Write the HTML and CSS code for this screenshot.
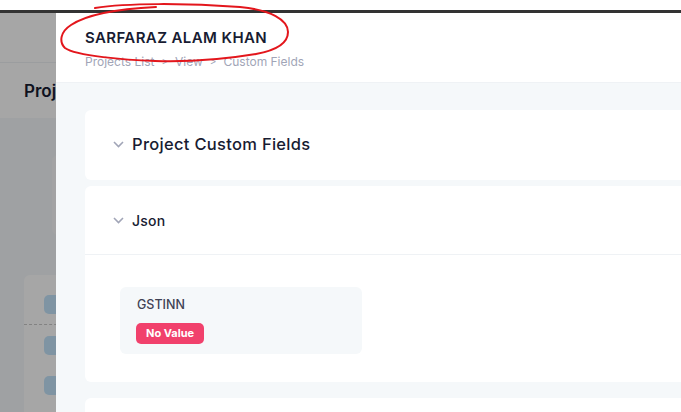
FILE: index.html
```html
<!DOCTYPE html>
<html>
<head>
<meta charset="utf-8">
<link rel="stylesheet" href="styles.css">
</head>
<body>
<div class="topgap"></div>
<div class="topbar"></div>
<div class="stage">
  <div class="page">
    <div class="page-header"></div>
    <div class="page-toolbar"><span class="page-title">Projects</span></div>
    <div class="page-content">
      <div class="page-card-a"></div>
      <div class="page-card-b">
        <div class="row first"><span class="pill"></span></div>
        <div class="row dashed"><span class="pill"></span></div>
        <div class="row"><span class="pill"></span></div>
      </div>
    </div>
  </div>
  <div class="backdrop"></div>
  <div class="drawer">
    <div class="drawer-header">
      <div class="drawer-title">SARFARAZ ALAM KHAN</div>
      <div class="crumbs"><span>Projects List</span><span class="sep">&gt;</span><span>View</span><span class="sep">&gt;</span><span>Custom Fields</span></div>
    </div>
    <div class="drawer-body">
      <div class="card card-first">
        <div class="card-head big">
          <svg class="chev" width="11" height="7" viewBox="0 0 11 7"><path d="M1 1 L5.5 5.5 L10 1" fill="none" stroke="#a1a5b7" stroke-width="1.6"/></svg>
          <span>Project Custom Fields</span>
        </div>
      </div>
      <div class="card card-second">
        <div class="card-head small bordered">
          <svg class="chev" width="11" height="7" viewBox="0 0 11 7"><path d="M1 1 L5.5 5.5 L10 1" fill="none" stroke="#a1a5b7" stroke-width="1.6"/></svg>
          <span>Json</span>
        </div>
        <div class="card-body">
          <div class="field">
            <div class="field-label">GSTINN</div>
            <span class="badge">No Value</span>
          </div>
        </div>
      </div>
      <div class="card card-third"></div>
    </div>
  </div>
</div>
<svg class="scribble" width="240" height="70" viewBox="0 0 240 70">
  <path d="M39 8 C70 3 130 3 184 7 C215 10 232 20 232 32 C232 42 222 50 200 54 C170 59 130 62 99 61 C70 60 20 56 9 48 C3 42 4 32 15 25 C30 15 60 9 100 7" fill="none" stroke="#e3161c" stroke-width="2" stroke-linecap="round"/>
</svg>
</body>
</html>
```
FILE: styles.css
```css
html, body {
  margin: 0;
  padding: 0;
  width: 681px;
  height: 412px;
  overflow: hidden;
  background: #ffffff;
  font-family: Inter, "Noto Sans", sans-serif;
}
body { position: relative; }
.topgap { height: 10px; background: #ffffff; }
.topbar { height: 3px; background: #333333; }
.stage {
  position: relative;
  height: 399px;
  overflow: hidden;
}
.page {
  width: 681px;
  height: 399px;
  background: #f5f8fa;
}
.page-header {
  height: 49px;
  background: #ffffff;
  border-bottom: 1px solid #eff2f5;
}
.page-toolbar {
  height: 55px;
  background: #ffffff;
  display: flex;
  align-items: center;
  padding-left: 24px;
}
.page-title {
  font-size: 17px;
  font-weight: 600;
  color: #181c32;
}
.page-content {
  padding-top: 37px;
}
.page-card-a {
  margin-left: 52px;
  width: 200px;
  height: 80px;
  background: #fafbfc;
  border-radius: 6px;
}
.page-card-b {
  margin-left: 24px;
  margin-top: 40px;
  width: 400px;
  height: 200px;
  background: #ffffff;
  border-radius: 6px;
  padding-top: 20px;
}
.row {
  padding-left: 20px;
}
.row.first { height: 29px; }
.row.dashed {
  border-top: 1px dashed #c8c8c8;
  padding-top: 11px;
  height: 40px;
}
.pill {
  display: block;
  width: 40px;
  height: 19px;
  background: #c4e4fb;
  border-radius: 5px;
}
.backdrop {
  position: absolute;
  inset: 0;
  background: rgba(0, 0, 0, 0.35);
}
.drawer {
  position: absolute;
  top: 0;
  left: 56px;
  width: 900px;
  height: 399px;
  background: #ffffff;
  display: flex;
  flex-direction: column;
}
.drawer-header {
  flex-shrink: 0;
  height: 69px;
  border-bottom: 1px solid #eff2f5;
  padding-left: 29px;
  display: flex;
  flex-direction: column;
  justify-content: center;
}
.drawer-title {
  font-size: 15px;
  font-weight: 600;
  color: #181c32;
  letter-spacing: 0.4px;
  margin-top: 1px;
}
.crumbs {
  margin-top: 7px;
  font-size: 12px;
  color: #a1a5b7;
  display: flex;
  gap: 7px;
}
.crumbs .sep { font-size: 10px; line-height: 15px; }
.scribble {
  position: absolute;
  left: 56px;
  top: 0;
}
.drawer-body {
  flex: 1;
  background: #f5f8fa;
  padding: 27px 29px;
}
.card {
  background: #ffffff;
  border-radius: 6px;
}
.card-first { height: 70px; margin-bottom: 6px; }
.card-second { margin-bottom: 16px; }
.card-third { height: 60px; }
.card-head {
  display: flex;
  align-items: center;
  padding-left: 28px;
  gap: 8px;
  color: #181c32;
}
.card-head.big { height: 68px; font-size: 16.5px; font-weight: 500; letter-spacing: 0.3px; }
.card-head.small { height: 68px; font-size: 14px; font-weight: 500; letter-spacing: 0.2px; }
.card-head.bordered { border-bottom: 1px solid #eff2f5; }
.chev { display: block; }
.card-body {
  padding: 32px 0 28px 35px;
}
.field {
  width: 225px;
  height: 50px;
  background: #f5f8fa;
  border-radius: 6px;
  padding: 10px 0 7px 17px;
}
.field-label {
  font-size: 12.5px;
  font-weight: 500;
  color: #3f4254;
  line-height: 16px;
}
.badge {
  display: inline-block;
  margin-top: 10px;
  margin-left: -1px;
  background: #f1416c;
  color: #ffffff;
  font-size: 11px;
  font-weight: 700;
  line-height: 21px;
  height: 21px;
  padding: 0 10px;
  border-radius: 5px;
}
```
